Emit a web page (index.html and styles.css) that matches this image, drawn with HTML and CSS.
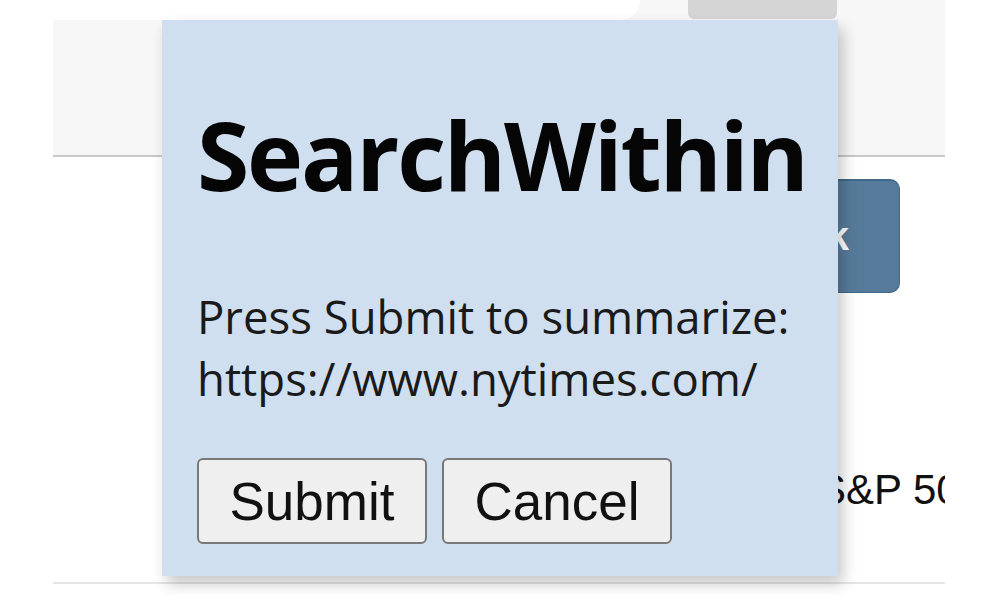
FILE: index.html
```html
<!DOCTYPE html>
<html lang="en">
<head>
<meta charset="utf-8">
<title>SearchWithin</title>
<link rel="stylesheet" href="styles.css">
</head>
<body>
<div class="page">
  <div class="header">
    <div class="header-top">
      <div class="search-box"></div>
      <div class="tab"></div>
    </div>
  </div>
  <div class="action-row">
    <div class="blue-btn">Ask</div>
  </div>
  <div class="ticker-row">
    <span class="ticker">S&amp;P 500</span>
  </div>
  <div class="bottom-line"></div>
</div>

<div class="popup">
  <h1 class="title">SearchWithin</h1>
  <p class="message">Press Submit to summarize:<br>https://www.nytimes.com/</p>
  <div class="buttons">
    <button class="btn">Submit</button>
    <button class="btn">Cancel</button>
  </div>
</div>
</body>
</html>
```

FILE: styles.css
```css
html, body {
  margin: 0;
  padding: 0;
  background: #ffffff;
}

body {
  position: relative;
  width: 1000px;
  height: 600px;
  overflow: hidden;
  font-family: "Open Sans", "Noto Sans", sans-serif;
}

.page {
  margin-left: 53px;
  width: 892px;
  height: 600px;
  display: flex;
  flex-direction: column;
  overflow: hidden;
}

.header {
  height: 155px;
  flex-shrink: 0;
  background: #f7f7f7;
  border-bottom: 2px solid #c8c8c8;
}

.header-top {
  display: flex;
  align-items: flex-start;
}

.search-box {
  width: 587px;
  height: 20px;
  background: #ffffff;
  border-bottom-right-radius: 22px;
}

.tab {
  margin-left: 48px;
  width: 149px;
  height: 19px;
  background: #d5d5d5;
  border-radius: 0 0 6px 6px;
}

.action-row {
  display: flex;
  justify-content: flex-end;
  padding-right: 45px;
  margin-top: 22px;
  flex-shrink: 0;
}

.blue-btn {
  width: 200px;
  height: 114px;
  box-sizing: border-box;
  background: #567b9a;
  border: 1px solid #40698a;
  border-top-width: 2px;
  border-radius: 10px;
  color: #ffffff;
  font-family: "Liberation Sans", Arial, sans-serif;
  font-weight: bold;
  font-size: 40px;
  line-height: 110px;
  text-align: right;
  padding-right: 50px;
}

.ticker-row {
  margin-top: 172px;
  padding-left: 765px;
  height: 50px;
  white-space: nowrap;
  flex-shrink: 0;
}

.ticker {
  font-family: "Liberation Sans", Arial, sans-serif;
  font-size: 42px;
  line-height: 50px;
  color: #111111;
}

.bottom-line {
  margin-top: 67px;
  height: 2px;
  flex-shrink: 0;
  background: #e6e6e6;
}

.popup {
  position: absolute;
  left: 162px;
  top: 20px;
  width: 676px;
  height: 556px;
  box-sizing: border-box;
  background: #cfdff0;
  box-shadow: 5px 8px 14px rgba(0, 0, 0, 0.22);
  padding: 77px 0 0 35px;
  display: flex;
  flex-direction: column;
}

.title {
  margin: 0;
  font-family: "Open Sans", "Noto Sans", sans-serif;
  font-weight: 700;
  font-size: 95px;
  line-height: 115px;
  letter-spacing: -2.2px;
  color: #050505;
}

.message {
  margin: 73px 0 0 0;
  font-size: 45.5px;
  line-height: 62px;
  color: #1a1a1a;
}

.buttons {
  margin-top: 49px;
  display: flex;
  gap: 15px;
}

.btn {
  width: 230px;
  height: 86px;
  box-sizing: border-box;
  background: #efefef;
  border: 2px solid #787878;
  border-radius: 6px;
  font-family: "Liberation Sans", Arial, sans-serif;
  font-size: 53px;
  color: #111111;
  padding: 0;
  line-height: 1;
}
```
